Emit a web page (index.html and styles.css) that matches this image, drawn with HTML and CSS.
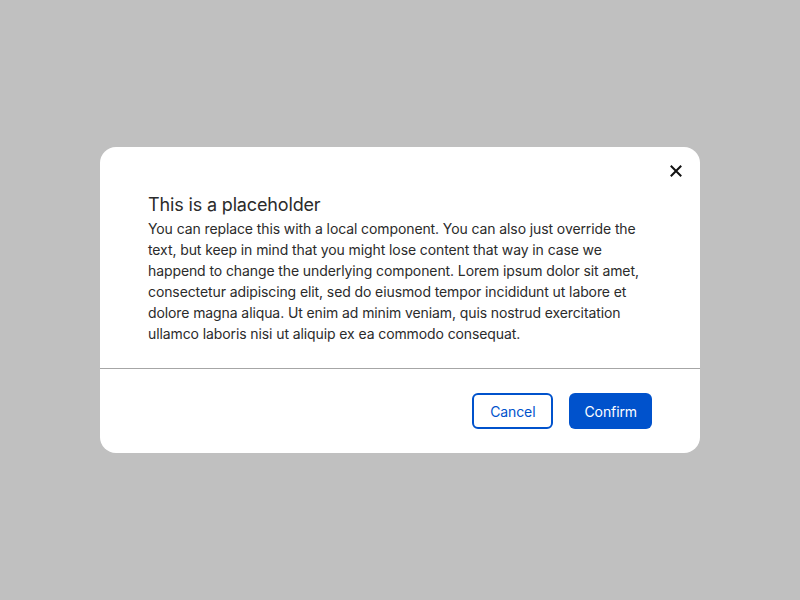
FILE: index.html
```html
<!DOCTYPE html>
<html lang="en">
<head>
<meta charset="utf-8">
<link rel="stylesheet" href="styles.css">
</head>
<body>
<div class="overlay">
  <div class="dialog" role="dialog">
    <div class="header">
      <button class="close" aria-label="Close">
        <svg width="12" height="12" viewBox="0 0 12 12"><path d="M1.5 1.5L10.5 10.5M10.5 1.5L1.5 10.5" stroke="#111" stroke-width="2" stroke-linecap="square"/></svg>
      </button>
    </div>
    <div class="content">
      <h2 class="title">This is a placeholder</h2>
      <p class="text">You can replace this with a local component. You can also just override the text, but keep in mind that you might lose content that way in case we happend to change the underlying component. Lorem ipsum dolor sit amet, consectetur adipiscing elit, sed do eiusmod tempor incididunt ut labore et dolore magna aliqua. Ut enim ad minim veniam, quis nostrud exercitation ullamco laboris nisi ut aliquip ex ea commodo consequat.</p>
    </div>
    <div class="footer">
      <button class="btn btn-secondary">Cancel</button>
      <button class="btn btn-primary">Confirm</button>
    </div>
  </div>
</div>
</body>
</html>
```

FILE: styles.css
```css
* { box-sizing: border-box; }
html, body { margin: 0; height: 100%; }
body {
  background: #c0c0c0;
  font-family: Inter, "Noto Sans", sans-serif;
}
.overlay {
  height: 600px;
  display: flex;
  align-items: center;
  justify-content: center;
}
.dialog {
  width: 600px;
  background: #fff;
  border-radius: 16px;
  display: flex;
  flex-direction: column;
}
.header {
  display: flex;
  justify-content: flex-end;
  padding: 12px 12px 0;
}
.close {
  width: 24px;
  height: 24px;
  border: 0;
  background: transparent;
  padding: 0;
  display: flex;
  align-items: center;
  justify-content: center;
}
.content {
  padding: 10px 48px 24px;
  border-bottom: 1px solid #a6a6a6;
}
.title {
  margin: 0 0 1px;
  font-size: 18px;
  font-weight: 400;
  line-height: 24px;
  letter-spacing: -0.15px;
  color: #2b2b2b;
}
.text {
  margin: 0;
  font-size: 14px;
  line-height: 21px;
  letter-spacing: -0.1px;
  color: #2b2b2b;
}
.footer {
  display: flex;
  justify-content: flex-end;
  gap: 16px;
  padding: 24px 48px;
}
.btn {
  height: 36px;
  border-radius: 6px;
  font-family: Inter, "Noto Sans", sans-serif;
  font-size: 14px;
  letter-spacing: -0.1px;
  cursor: pointer;
}
.btn-secondary {
  padding: 0 16px;
  background: #fff;
  color: #0052cc;
  border: 2px solid #0052cc;
}
.btn-primary {
  padding: 0 15px;
  background: #0052cc;
  color: #fff;
  border: 0;
}
```
